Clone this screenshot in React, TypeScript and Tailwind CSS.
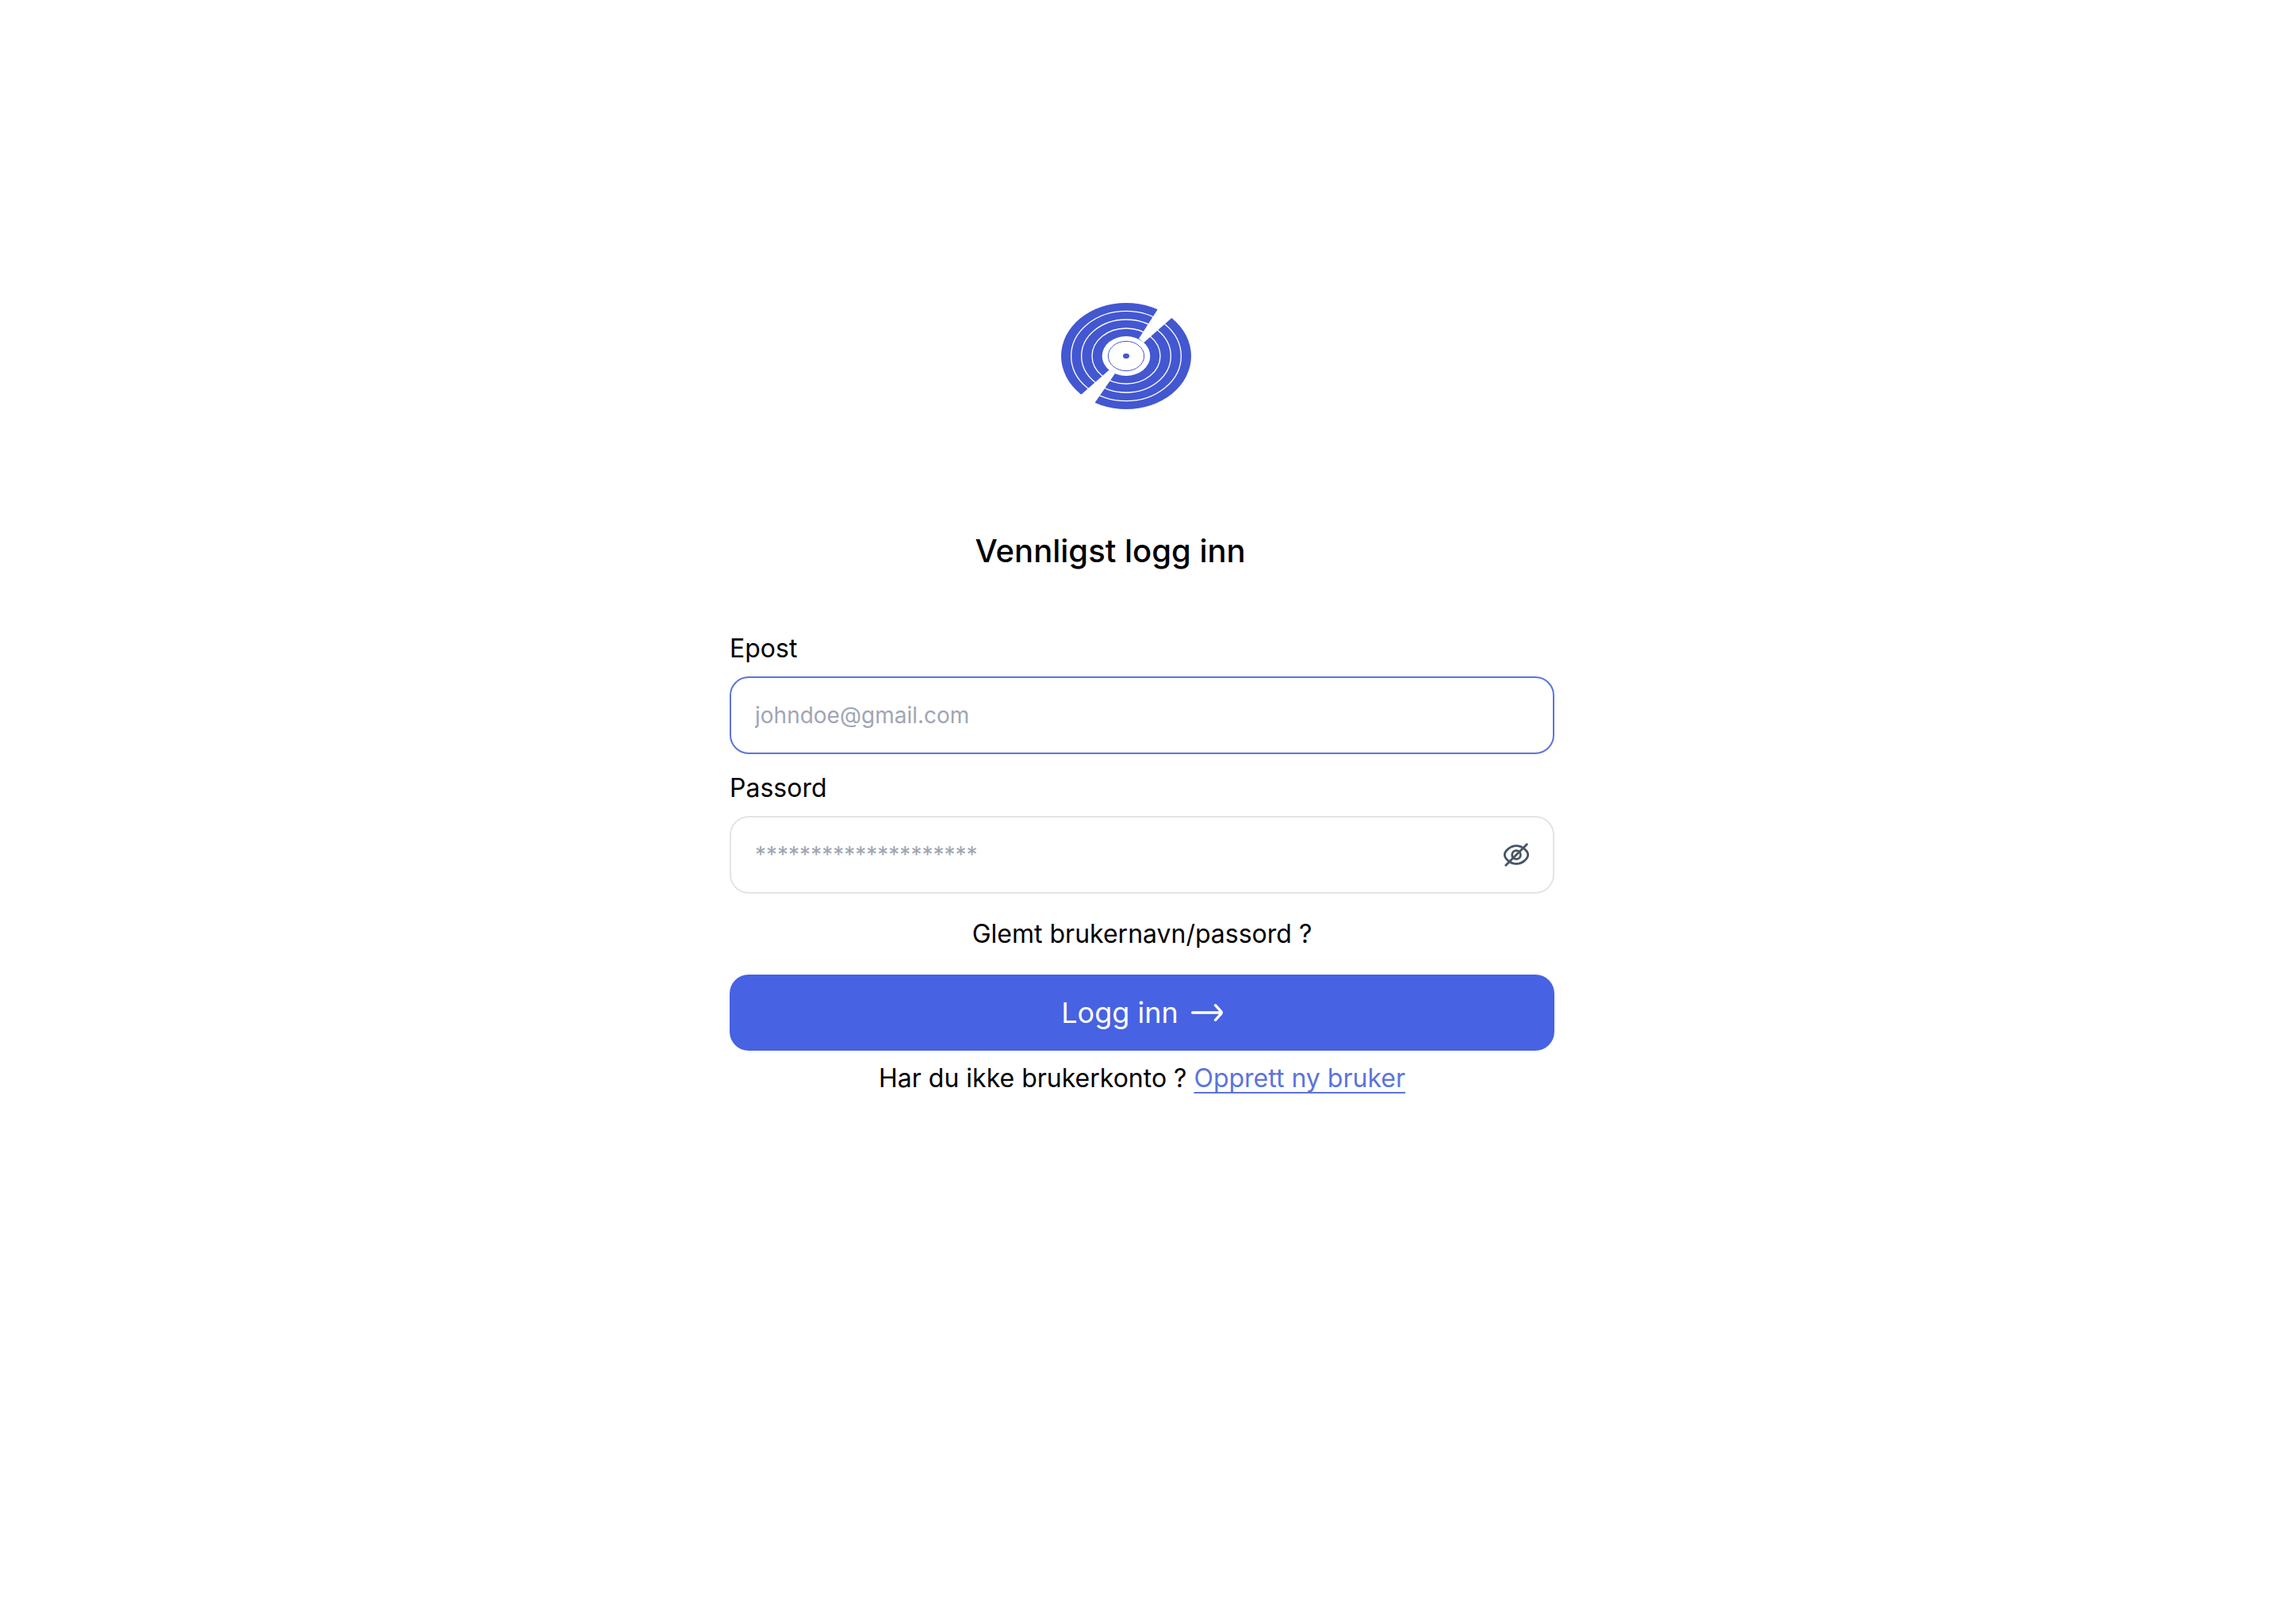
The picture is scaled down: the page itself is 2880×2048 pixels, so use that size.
import { useState } from "react";

function RecordLogo() {
  return (
    <svg viewBox="54 36 492 402" className="h-[134px] w-[164px]" role="img" aria-label="Logo">
      <ellipse cx="300" cy="237" rx="246" ry="201" fill="#4357d1" />
      <g fill="none" stroke="#ffffff" strokeWidth="4">
        <ellipse cx="300" cy="237" rx="208" ry="170" />
        <ellipse cx="300" cy="237" rx="169" ry="138" />
        <ellipse cx="300" cy="237" rx="129" ry="105" />
      </g>
      <ellipse cx="300" cy="237" rx="91" ry="75" fill="#ffffff" />
      <path d="M348 171 419 61 434 30H540L472 93 367 186ZM235 290 131 382 60 445H163L183 412 258 303Z" fill="#ffffff" />
      <ellipse cx="300" cy="237" rx="68" ry="56" fill="none" stroke="#4357d1" strokeWidth="3" />
      <ellipse cx="300" cy="237" rx="12" ry="9.5" fill="#4357d1" />
    </svg>
  );
}

function EyeOffIcon() {
  return (
    <svg viewBox="0 0 36 36" className="size-9" fill="none" stroke="#475466" strokeWidth="2.8" strokeLinecap="round" aria-hidden="true">
      <path d="M3.3 18C3.3 13.5 10 6.6 18 6.6S32.7 13.5 32.7 18 26 29.4 18 29.4 3.3 22.5 3.3 18Z" />
      <circle cx="18" cy="18" r="5.4" />
      <path d="M4.7 31.3 31.3 4.7" />
    </svg>
  );
}

function ArrowIcon() {
  return (
    <svg viewBox="0 0 40 24" className="h-6 w-10" fill="none" stroke="#ffffff" strokeWidth="3.4" strokeLinecap="round" strokeLinejoin="round" aria-hidden="true">
      <path d="M1.7 12H38M30.5 2.7 37.4 10.2Q39 12 37.4 13.8L30.5 21.3" />
    </svg>
  );
}

const fieldClass =
  "h-[98px] w-full rounded-3xl border-2 bg-white px-[30px] text-[28px] text-black outline-none placeholder:text-[#9fa6b4] placeholder:opacity-100";

export default function App() {
  const [visible, setVisible] = useState(false);

  return (
    <main className="min-h-screen bg-white px-6 pt-[382px] pb-24 font-['Inter',sans-serif] text-[32px] leading-[48px] text-black">
      <div className="mx-auto flex w-full max-w-[1040px] flex-col">
        <div className="flex justify-center pr-10">
          <RecordLogo />
        </div>
        <h1 className="mt-[155px] pr-20 text-center text-[40px] leading-[48px] font-medium">Vennligst logg inn</h1>

        <form className="mt-[75px] flex flex-col" onSubmit={(e) => e.preventDefault()}>
          <div className="flex flex-col gap-[11px]">
            <label htmlFor="email">Epost</label>
            <input id="email" type="email" placeholder="johndoe@gmail.com" className={`${fieldClass} border-[#5b74dd]`} />
          </div>

          <div className="mt-[19px] flex flex-col gap-[11px]">
            <label htmlFor="password">Passord</label>
            <div className="relative">
              <input
                id="password"
                type={visible ? "text" : "password"}
                placeholder="********************"
                className={`${fieldClass} border-[#e4e4e4] pr-24`}
              />
              <button
                type="button"
                aria-label="Vis passord"
                onClick={() => setVisible(!visible)}
                className="absolute inset-y-0 right-[30px] flex items-center"
              >
                <EyeOffIcon />
              </button>
            </div>
          </div>

          <a href="#glemt" className="mt-[27px] self-center">
            Glemt brukernavn/passord ?
          </a>

          <button type="submit" className="mt-[27px] flex h-24 w-full items-center justify-center gap-4 rounded-3xl bg-[#4762e2] text-[36px] text-white">
            Logg inn
            <ArrowIcon />
          </button>
        </form>

        <p className="mt-[11px] text-center">
          Har du ikke brukerkonto ?{" "}
          <a
            href="#opprett"
            className="text-[#5b74dd] underline decoration-2 underline-offset-[6px] [text-decoration-skip-ink:none]"
          >
            Opprett ny bruker
          </a>
        </p>
      </div>
    </main>
  );
}
